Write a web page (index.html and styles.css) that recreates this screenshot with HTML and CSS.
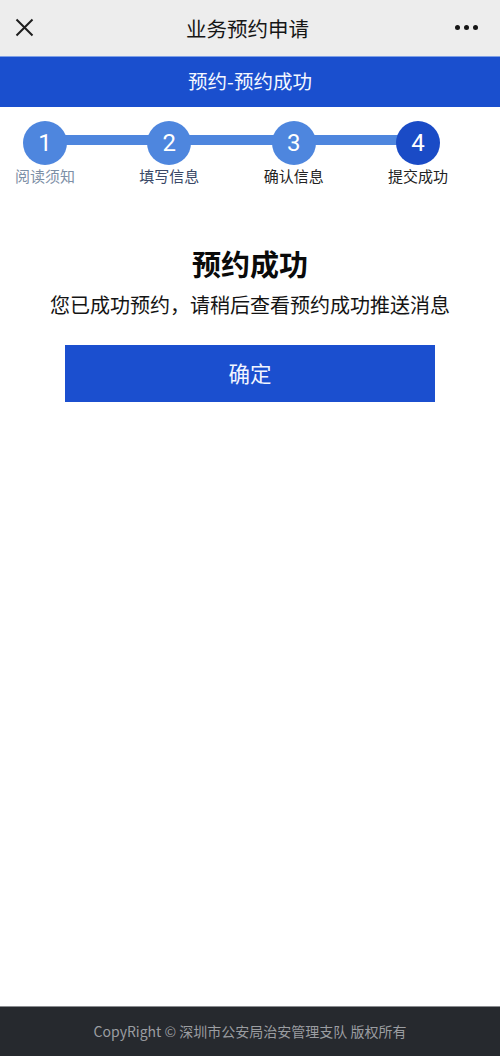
FILE: index.html
```html
<!DOCTYPE html>
<html lang="zh-CN">
<head>
<meta charset="utf-8">
<title>业务预约申请</title>
<link rel="stylesheet" href="styles.css">
</head>
<body>
<div class="page">
  <header class="topbar">
    <span class="close-btn">
      <svg width="19" height="19" viewBox="0 0 19 19"><path d="M1.5 1.5L17.5 17.5M17.5 1.5L1.5 17.5" stroke="#1e1e1e" stroke-width="2" fill="none"/></svg>
    </span>
    <h1 class="title">业务预约申请</h1>
    <span class="more-btn"><i></i><i></i><i></i></span>
  </header>
  <div class="banner">预约-预约成功</div>
  <main class="content">
    <div class="steps">
      <div class="step">
        <span class="circle">1</span>
        <span class="label label-1">阅读须知</span>
      </div>
      <span class="bar"></span>
      <div class="step">
        <span class="circle">2</span>
        <span class="label label-2">填写信息</span>
      </div>
      <span class="bar"></span>
      <div class="step">
        <span class="circle">3</span>
        <span class="label">确认信息</span>
      </div>
      <span class="bar"></span>
      <div class="step">
        <span class="circle circle-active">4</span>
        <span class="label">提交成功</span>
      </div>
    </div>
    <section class="result">
      <h2 class="result-title">预约成功</h2>
      <p class="result-text">您已成功预约，请稍后查看预约成功推送消息</p>
      <button class="confirm-btn">确定</button>
    </section>
  </main>
  <footer class="footer">CopyRight © 深圳市公安局治安管理支队 版权所有</footer>
</div>
</body>
</html>
```

FILE: styles.css
```css
* { box-sizing: border-box; }
html, body { margin: 0; padding: 0; }
body {
  font-family: "Noto Sans CJK SC", "Noto Sans", sans-serif;
  background: #ffffff;
  color: #111;
}
.page {
  min-height: 100vh;
  display: flex;
  flex-direction: column;
}
.topbar {
  height: 56px;
  background: #ededed;
  display: flex;
  align-items: center;
  justify-content: space-between;
  padding: 0 22px 0 15px;
}
.close-btn { display: flex; width: 19px; height: 19px; margin-top: -1px; }
.title {
  margin: 0;
  font-size: 20.5px;
  font-weight: 400;
  color: #161616;
  letter-spacing: 0;
  line-height: 1;
  padding-left: 6px;
}
.more-btn { display: flex; gap: 4px; align-items: center; margin-top: -2px; }
.more-btn i {
  display: block;
  width: 5px;
  height: 5px;
  border-radius: 50%;
  background: #161616;
}
.banner {
  height: 51px;
  background: #1a4fce;
  border-top: 1px solid #7fa0e6;
  color: #f4f7ff;
  font-size: 19.5px;
  display: flex;
  align-items: center;
  justify-content: center;
  line-height: 1;
  padding-bottom: 2px;
}
.content { flex: 1; }
.steps {
  display: flex;
  align-items: flex-start;
  width: 417px;
  margin: 14px 0 0 23px;
}
.step {
  width: 44px;
  display: flex;
  flex-direction: column;
  align-items: center;
  flex: none;
}
.circle {
  width: 44px;
  height: 44px;
  border-radius: 50%;
  background: #4e86de;
  color: #fff;
  font-family: Roboto, "Noto Sans", sans-serif;
  font-size: 24px;
  display: flex;
  align-items: center;
  justify-content: center;
  line-height: 1;
}
.circle-active { background: #1a4bc6; }
.bar {
  flex: 1;
  height: 10px;
  margin: 14px -2px 0;
  background: #4e86de;
}
.label {
  white-space: nowrap;
  font-size: 15px;
  line-height: 1;
  margin-top: 3px;
  color: #222;
}
.label-1 { color: #7d8fa6; }
.label-2 { color: #3a4866; }
.result {
  display: flex;
  flex-direction: column;
  align-items: center;
  padding-top: 66px;
}
.result-title {
  margin: 0;
  font-size: 29px;
  font-weight: 700;
  line-height: 1;
  color: #0a0a0a;
}
.result-text {
  margin: 17px 0 0;
  font-size: 20px;
  line-height: 1;
  color: #141414;
}
.confirm-btn {
  margin-top: 30px;
  width: 370px;
  height: 57px;
  border: none;
  background: #1b4fcf;
  color: #f2f5ff;
  font-family: "Noto Sans CJK SC", sans-serif;
  font-size: 21.5px;
  line-height: 1;
  padding: 0 0 2px;
}
.footer {
  height: 50px;
  background: #26292e;
  border-top: 1px solid #8a8c90;
  color: #9b9da1;
  font-size: 14px;
  display: flex;
  align-items: center;
  justify-content: center;
  padding-bottom: 1px;
}
```
